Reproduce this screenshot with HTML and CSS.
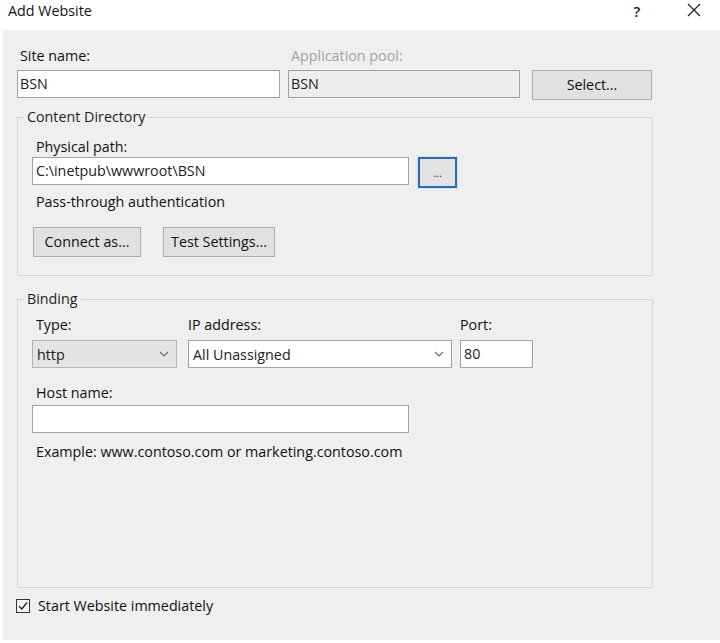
FILE: index.html
```html
<!DOCTYPE html>
<html>
<head>
<meta charset="utf-8">
<title>Add Website</title>
<link rel="stylesheet" href="styles.css">
</head>
<body>
<div class="titlebar">
  <span class="title">Add Website</span>
  <span class="help">?</span>
  <span class="close"><svg width="14" height="14" viewBox="0 0 14 14"><path d="M1 1 L13 13 M13 1 L1 13" stroke="#222" stroke-width="1.2" fill="none"/></svg></span>
</div>
<div class="dialog">
  <div class="top-row">
    <div class="field site">
      <div class="label">Site name:</div>
      <div class="textbox">BSN</div>
    </div>
    <div class="field pool">
      <div class="label disabled">Application pool:</div>
      <div class="textbox readonly">BSN</div>
    </div>
    <button class="btn select-btn">Select...</button>
  </div>

  <fieldset class="group content-group">
    <legend>Content Directory</legend>
    <div class="group-body">
      <div class="label">Physical path:</div>
      <div class="path-row">
        <div class="textbox path">C:\inetpub\wwwroot\BSN</div>
        <button class="btn browse">...</button>
      </div>
      <div class="label auth">Pass-through authentication</div>
      <div class="btn-row">
        <button class="btn connect">Connect as...</button>
        <button class="btn test">Test Settings...</button>
      </div>
    </div>
  </fieldset>

  <fieldset class="group binding-group">
    <legend>Binding</legend>
    <div class="group-body binding-body">
      <div class="binding-row">
        <div class="field type">
          <div class="label">Type:</div>
          <div class="combo gray"><span>http</span><svg width="10" height="6" viewBox="0 0 10 6"><path d="M1 1 L5 5 L9 1" stroke="#666" stroke-width="1.1" fill="none"/></svg></div>
        </div>
        <div class="field ip">
          <div class="label">IP address:</div>
          <div class="combo"><span>All Unassigned</span><svg width="10" height="6" viewBox="0 0 10 6"><path d="M1 1 L5 5 L9 1" stroke="#666" stroke-width="1.1" fill="none"/></svg></div>
        </div>
        <div class="field port">
          <div class="label">Port:</div>
          <div class="textbox portbox">80</div>
        </div>
      </div>
      <div class="label host-label">Host name:</div>
      <div class="textbox host"></div>
      <div class="label example">Example: www.contoso.com or marketing.contoso.com</div>
    </div>
  </fieldset>

  <div class="check-row">
    <span class="checkbox"><svg width="12" height="12" viewBox="0 0 12 12"><path d="M2 6.2 L4.8 9 L10 2.5" stroke="#222" stroke-width="1.3" fill="none"/></svg></span>
    <span class="check-label">Start Website immediately</span>
  </div>
</div>
</body>
</html>
```

FILE: styles.css
```css
* { box-sizing: border-box; }
html, body { margin: 0; padding: 0; background: #ffffff; }
body {
  font-family: "Open Sans", "Noto Sans", sans-serif;
  font-size: 14.3px;
  color: #111111;
  width: 720px;
  height: 643px;
  overflow: hidden;
}
.titlebar {
  height: 30px;
  display: flex;
  align-items: flex-start;
  padding: 2px 0 0 8px;
  line-height: 18px;
}
.title { flex: 1; color: #111; }
.help { width: 14px; margin-right: 43px; text-align: center; color: #222; font-size: 15px; font-weight: 600; }
.close { width: 14px; margin-right: 19px; margin-top: 1px; display: flex; }

.dialog {
  margin-left: 3px;
  height: 610px;
  background: #efefef;
  padding: 17px 0 0 14px;
}
.label { line-height: 18px; padding-left: 4px; white-space: nowrap; }
.label.disabled { color: #a3a3a3; }

.top-row { display: flex; align-items: flex-start; }
.field { display: flex; flex-direction: column; }
.site { width: 263px; }
.pool { width: 232px; margin-left: 8px; }
.top-row .label { margin-bottom: 5px; padding-left: 3px; }

.textbox {
  height: 28px;
  border: 1px solid #a2a2a2;
  background: #ffffff;
  line-height: 26px;
  padding-left: 2px;
  color: #222222;
  white-space: nowrap;
}
.textbox.readonly { background: #eeeeee; }

.btn {
  font: inherit;
  color: #111111;
  background: #e1e1e1;
  border: 1px solid #adadad;
  height: 30px;
  padding: 0;
  margin: 0;
  line-height: 28px;
}
.select-btn { width: 120px; margin-left: 12px; margin-top: 23px; }

.group {
  margin: 0;
  padding: 0;
  width: 636px;
  border: 1px solid #d6d6d6;
  min-width: 0;
}
.group legend {
  margin-left: 6px;
  padding: 0 3px;
  line-height: 18px;
  color: #1e1e1e;
}
.content-group { margin-top: 8px; }
.group-body { padding: 12px 0 18px 14px; }

.path-row { display: flex; align-items: flex-start; margin-top: 1px; }
.path { width: 377px; padding-left: 3px; }
.browse {
  width: 39px;
  height: 31px;
  margin-left: 9px;
  border: 2px solid #2d6ab3;
  box-shadow: 0 0 0 1px #cfe3f6;
  background: #e3e3e3;
  font-size: 11px;
  line-height: 26px;
  color: #333;
}
.auth { margin-top: 5px; }
.btn-row { display: flex; margin-top: 16px; padding-left: 1px; }
.connect { width: 108px; }
.test { width: 112px; margin-left: 22px; }

.binding-group { margin-top: 14px; }
.binding-body { padding: 8px 0 126px 14px; }
.binding-row { display: flex; align-items: flex-start; }
.binding-row .label { margin-bottom: 6px; }
.type { width: 145px; }
.ip { width: 264px; margin-left: 11px; }
.ip .label { padding-left: 0; }
.port { width: 73px; margin-left: 8px; }
.port .label { padding-left: 0; }
.portbox { padding-left: 3px; }

.combo {
  height: 28px;
  border: 1px solid #a2a2a2;
  background: #ffffff;
  display: flex;
  align-items: center;
  justify-content: space-between;
  padding: 0 7px 0 4px;
  color: #222222;
}
.combo.gray { background: #e4e4e4; border-color: #b4b4b4; }

.host-label { margin-top: 16px; }
.host { width: 377px; margin-top: 3px; }
.example { margin-top: 10px; }

.check-row {
  display: flex;
  align-items: center;
  margin-top: 9px;
  margin-left: -1px;
  height: 18px;
}
.checkbox {
  width: 14px;
  height: 14px;
  border: 1px solid #333;
  background: #f4f4f4;
  display: flex;
  align-items: center;
  justify-content: center;
}
.check-label { margin-left: 8px; line-height: 18px; }
```
